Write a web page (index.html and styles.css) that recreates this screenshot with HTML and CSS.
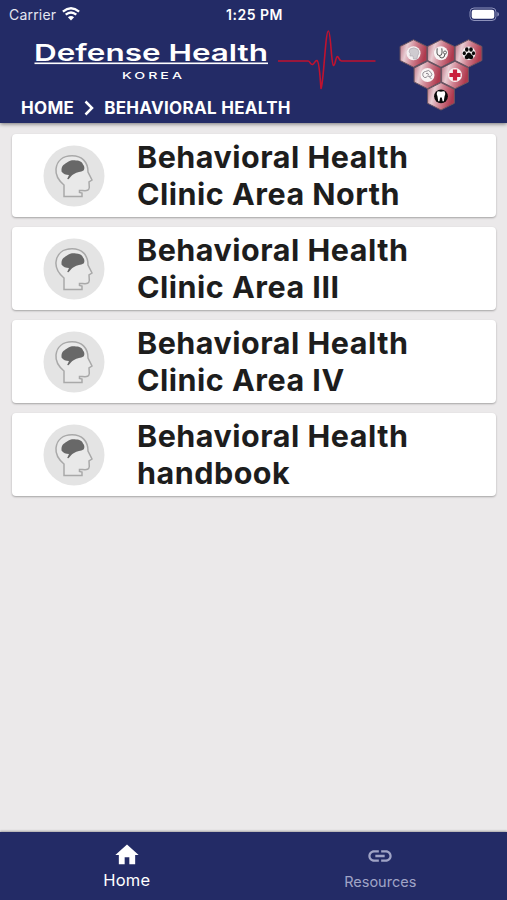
FILE: index.html
```
<!DOCTYPE html>
<html lang="en">
<head>
    <meta charset="UTF-8">
    <meta name="viewport" content="width=device-width, initial-scale=1.0">
    <title>Defense Health Korea</title>
    <link rel="stylesheet" href="styles.css">
</head>
<body>
    <!-- shared shapes -->
    <svg class="defs" width="0" height="0" aria-hidden="true">
        <defs>
            <linearGradient id="hex-fill" x1="0" y1="0" x2="1" y2="0.25">
                <stop offset="0" stop-color="#b9697b" />
                <stop offset="0.3" stop-color="#e8cdd3" />
                <stop offset="0.6" stop-color="#cf8291" />
                <stop offset="1" stop-color="#b03a4e" />
            </linearGradient>
            <symbol id="hex" viewBox="-15 -15 30 30">
                <path d="M0-13.7 13.4-7V7L0 13.7-13.4 7V-7Z" fill="url(#hex-fill)" stroke="#6b5660" stroke-width="1" />
            </symbol>
            <symbol id="mind" viewBox="0 0 62 62">
                <circle cx="31" cy="31" r="30.5" fill="#e4e4e4" />
                <path d="M21 51.500V40C15 35 12.500 29 13 24C14 15.500 20 10.800 29 10.800C39 10.800 45 17 45 27L49 35L46 37L46.300 42.500C46 45.500 44 46 39.500 45.500H36.500V47.500L39 48V51.500Z" fill="#e9e9e9" stroke="#a9a9a9" stroke-width="1.500" />
                <path d="M18.500 24C19 20 22 19 24 17.500C27 14.800 31 15 33 15.500C37 15.500 39.500 17.500 40 19.500C42 21.500 41.500 24.500 40.500 25.500C38 27 34 27 31 29C28.500 30 27.500 32.500 25.500 34.300L24.200 34L26 30C23 30 20 29 18.500 26.500Z" fill="#686868" />
            </symbol>
        </defs>
    </svg>

    <header class="header">
        <div class="status">
            <div class="carrier">
                <span>Carrier</span>
                <svg width="18" height="14" viewBox="0 0 18 14" fill="none" stroke="#fff" stroke-width="2.300">
                    <path d="M.9 4.700Q9-2.100 17.100 4.700M3.700 7.700Q9 3.200 14.300 7.700" />
                    <path d="M9 13.500 5.900 10.300Q9 7.700 12.100 10.300Z" fill="#fff" stroke="none" />
                </svg>
            </div>
            <span class="time">1:25 PM</span>
            <svg class="battery" width="31" height="15" viewBox="0 0 31 15">
                <rect x="1" y="1" width="26" height="12.500" rx="4" fill="none" stroke="#8d92bb" />
                <rect x="2.700" y="2.700" width="22.600" height="9.100" rx="2.300" fill="#fff" />
                <path d="M28.300 5Q30 5.500 30 7.200T28.300 9.500Z" fill="#8d92bb" />
            </svg>
        </div>

        <div class="banner">
            <div class="brand">
                <svg width="244" height="67" viewBox="30 28 244 67" fill="#fff">
                    <text class="logo" x="34" y="61" textLength="234" lengthAdjust="spacingAndGlyphs">Defense Health</text>
                    <rect x="34.500" y="62.500" width="233.500" height="1.600" />
                    <text class="logo-sub" x="122" y="79.200" textLength="63" lengthAdjust="spacingAndGlyphs">KOREA</text>
                </svg>
                <svg width="102" height="67" viewBox="276 28 102 67" fill="none" stroke="#c1122f" stroke-width="1.600" stroke-linejoin="round">
                    <path d="M278 61H308C310 61 310.500 65 312.500 64.500C314.500 64 315 60 317 60.500C319.500 61.500 320 78 321 88.500C323.500 85 325.500 31 328.300 31C331 31 331 64 333.500 65.500C335.500 65.500 335.500 56.500 337.500 56.500C339 57 339 61 341.500 61H375.500" />
                </svg>
            </div>
            <nav class="crumbs">
                <span>HOME</span>
                <svg width="10" height="16" viewBox="0 0 10 16" fill="none" stroke="#fff" stroke-width="2.500">
                    <path d="M1.500 1.500 8 8 1.500 14.500" />
                </svg>
                <span>BEHAVIORAL HEALTH</span>
            </nav>
            <svg class="services" width="90" height="80" viewBox="396 35 90 80">
                <use href="#hex" x="398.500" y="38.500" width="30" height="30" />
                <use href="#hex" x="426" y="38.500" width="30" height="30" />
                <use href="#hex" x="453.500" y="38.500" width="30" height="30" />
                <use href="#hex" x="412.500" y="60" width="30" height="30" />
                <use href="#hex" x="440" y="60" width="30" height="30" />
                <use href="#hex" x="426" y="81.300" width="30" height="30" />
                <!-- head -->
                <circle cx="413.500" cy="53.300" r="7" fill="#f5f1f2" />
                <path d="M410 49Q414 46.500 418 49.500Q420 53 417.500 56L417 59H413.500L413 56L410 56L410.300 53L409 52Z" fill="#cfcbd0" stroke="#aaa5ad" stroke-width=".6" />
                <!-- stethoscope -->
                <circle cx="441" cy="53.300" r="7" fill="#f8f5f5" />
                <path d="M437 49.500V53Q437 55.500 439.500 55.500T442 53V49.500M436.500 49H438M441 49H442.500M439.500 55.500Q439.500 58 442 58T445 54" fill="none" stroke="#555" stroke-width="1" />
                <circle cx="445" cy="52.500" r="1.500" fill="none" stroke="#444" stroke-width=".8" />
                <!-- paw -->
                <circle cx="468.800" cy="53.300" r="6.700" fill="#f5f1f2" />
                <g fill="#090909">
                    <ellipse cx="466.800" cy="49.500" rx="1.800" ry="2.300" />
                    <ellipse cx="471" cy="49.500" rx="1.800" ry="2.300" />
                    <ellipse cx="464.300" cy="53.300" rx="1.600" ry="2" />
                    <ellipse cx="473.500" cy="53.300" rx="1.600" ry="2" />
                    <path d="M468.900 52.500Q470.500 52.700 471.300 54.500Q474 56 473 58.300Q471.500 60 468.900 58.500Q466.300 60 464.800 58.300Q464 56 466.500 54.500Q467.300 52.700 468.900 52.500Z" />
                </g>
                <!-- brain -->
                <circle cx="427.500" cy="75" r="7" fill="#f8f5f5" />
                <path d="M423 76Q422 72 425.500 71.500Q429 69 431 72.500Q433 75 430.500 76.500Q427 75 426 77.500Q424 78 423 76M429 76.500 431.500 79M426 73.500Q428.500 72.500 428.500 75" fill="none" stroke="#77717a" stroke-width=".8" />
                <!-- cross -->
                <circle cx="455" cy="75" r="7" fill="#f8f1f1" />
                <path d="M452.900 69.500H457.100V72.900H460.500V77.100H457.100V80.500H452.900V77.100H449.500V72.900H452.900Z" fill="#c91f3b" />
                <!-- tooth -->
                <circle cx="441" cy="96.300" r="6.900" fill="#080808" />
                <path d="M437.300 91.500Q439 90.800 441 91.800Q443 90.800 444.700 91.500Q446 94 444.500 96.500L443.800 101.300H442.600L441.800 97.500H440.200L439.400 101.300H438.200L437.500 96.500Q436 94 437.300 91.500Z" fill="#fff" />
            </svg>
        </div>
    </header>

    <main class="list">
        <a class="card">
            <svg class="card-icon" width="62" height="62"><use href="#mind" /></svg>
            <span class="card-title">Behavioral Health<br>Clinic Area North</span>
        </a>
        <a class="card">
            <svg class="card-icon" width="62" height="62"><use href="#mind" /></svg>
            <span class="card-title">Behavioral Health<br>Clinic Area III</span>
        </a>
        <a class="card">
            <svg class="card-icon" width="62" height="62"><use href="#mind" /></svg>
            <span class="card-title">Behavioral Health<br>Clinic Area IV</span>
        </a>
        <a class="card">
            <svg class="card-icon" width="62" height="62"><use href="#mind" /></svg>
            <span class="card-title">Behavioral Health<br>handbook</span>
        </a>
    </main>

    <nav class="tabs">
        <a class="tab active">
            <svg width="28" height="28" viewBox="0 0 24 24" fill="currentColor"><path d="M10 20v-6h4v6h5v-8h3L12 3 2 12h3v8z" /></svg>
            <span>Home</span>
        </a>
        <a class="tab">
            <svg width="30" height="28" viewBox="0 0 24 24" fill="currentColor"><path d="M3.900 12c0-1.710 1.390-3.100 3.100-3.100h4V7H7c-2.760 0-5 2.240-5 5s2.240 5 5 5h4v-1.900H7c-1.710 0-3.100-1.390-3.100-3.100zM8 13h8v-2H8v2zm9-6h-4v1.900h4c1.710 0 3.100 1.390 3.100 3.100s-1.390 3.100-3.100 3.100h-4V17h4c2.760 0 5-2.240 5-5s-2.240-5-5-5z" /></svg>
            <span>Resources</span>
        </a>
    </nav>
</body>
</html>
```
FILE: styles.css
```
* { box-sizing: border-box; }
body {
    margin: 0;
    height: 900px;
    display: flex;
    flex-direction: column;
    overflow: hidden;
    background: #ebe9ea;
    font-family: Inter, "Liberation Sans", sans-serif;
}
svg { display: block; flex: none; }
.defs { position: absolute; }

.header {
    height: 123px;
    background: #232b66;
    color: #fff;
    box-shadow: 0 1px 4px rgba(0, 0, 0, 0.5);
}
.status {
    display: grid;
    grid-template-columns: 1fr auto 1fr;
    align-items: center;
    height: 28px;
    padding: 0 7px 0 9px;
    font-size: 14px;
}
.carrier {
    display: flex;
    align-items: center;
    gap: 6px;
    color: #e5e6f1;
    letter-spacing: 0.2px;
}
.time { font-weight: 600; font-size: 14px; letter-spacing: 0.5px; }
.battery { justify-self: end; }

.banner {
    display: grid;
    grid-template-columns: 366px 1fr;
    grid-template-rows: 67px 28px;
    padding-left: 30px;
}
.brand { display: flex; gap: 2px; }
.logo { font-size: 23.5px; font-weight: 600; }
.logo-sub { font-size: 9.5px; font-weight: 500; letter-spacing: 2px; }
.crumbs {
    grid-row: 2;
    display: flex;
    align-items: center;
    gap: 10px;
    margin-left: -9px;
    padding-bottom: 3px;
    font-size: 17px;
    font-weight: 700;
    letter-spacing: 0.3px;
    white-space: nowrap;
}
.services {
    grid-column: 2;
    grid-row: 1 / 3;
    margin-top: 7px;
}

.list {
    flex: 1;
    display: flex;
    flex-direction: column;
    gap: 10px;
    padding: 11px 11px 0 12px;
}
.card {
    display: flex;
    align-items: center;
    height: 83px;
    padding-left: 31px;
    border-radius: 4px;
    background: #fff;
    box-shadow: 0 1px 2px rgba(0, 0, 0, 0.3);
}
.card-title {
    margin-left: 32px;
    color: #1d1d1d;
    font-size: 30.5px;
    font-weight: 650;
    line-height: 36.5px;
    letter-spacing: 0.5px;
    white-space: nowrap;
}

.tabs {
    display: flex;
    height: 68px;
    background: #232b66;
    box-shadow: 0 -1px 2px rgba(0, 0, 0, 0.3);
}
.tab {
    flex: 1;
    display: flex;
    flex-direction: column;
    align-items: center;
    padding-top: 10px;
    color: #a0a4c6;
    font-size: 14.5px;
    line-height: 24px;
}
.active { padding-top: 9px; color: #fff; font-size: 16.5px; line-height: 23px; letter-spacing: 0.2px; }
```
